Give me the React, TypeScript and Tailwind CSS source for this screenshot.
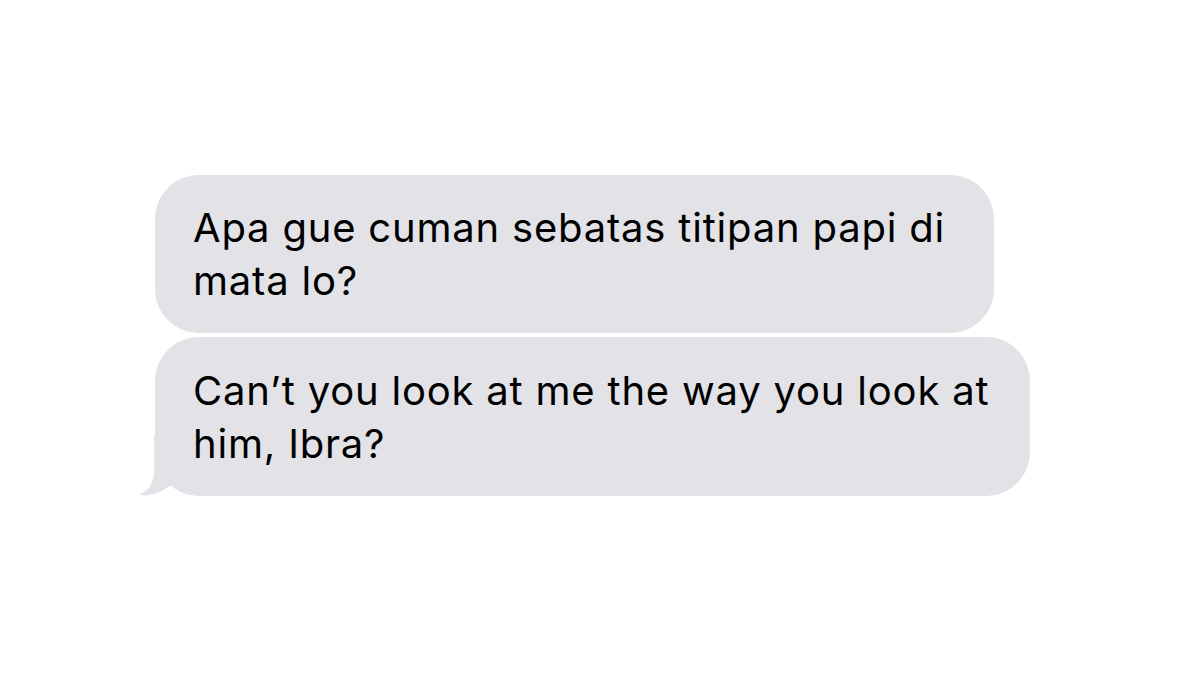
import React from "react";

export default function App() {
  return (
    <div className="w-[1200px] h-[675px] bg-white overflow-hidden">
      <div
        className="flex flex-col items-start gap-[4px] pt-[175px] pl-[155px]"
        style={{ fontFamily: "Inter, 'Liberation Sans', sans-serif" }}
      >
        <div className="w-[839px] rounded-[44px] bg-[#e2e2e7] pl-[38px] pr-[36px] pt-[26px] pb-[26px] text-[40px] leading-[53px] tracking-[0.8px] text-black">
          Apa gue cuman sebatas titipan papi di mata lo?
        </div>
        <div className="relative w-[875px] rounded-[44px] bg-[#e2e2e7] pl-[38px] pr-[30px] pt-[27px] pb-[26px] text-[40px] leading-[53px] tracking-[0.8px] text-black">
          <svg
            className="absolute left-[-20px] bottom-0 overflow-visible"
            width="80"
            height="60"
            viewBox="0 0 80 60"
          >
            <path
              d="M19 0 L19 36 C19 48 13 55 4 59 C16 61 29 55 39 47 C48 55 60 60 80 60 L80 0 Z"
              fill="#e2e2e7"
            />
          </svg>
          <span className="relative">Can’t you look at me the way you look at him, Ibra?</span>
        </div>
      </div>
    </div>
  );
}
